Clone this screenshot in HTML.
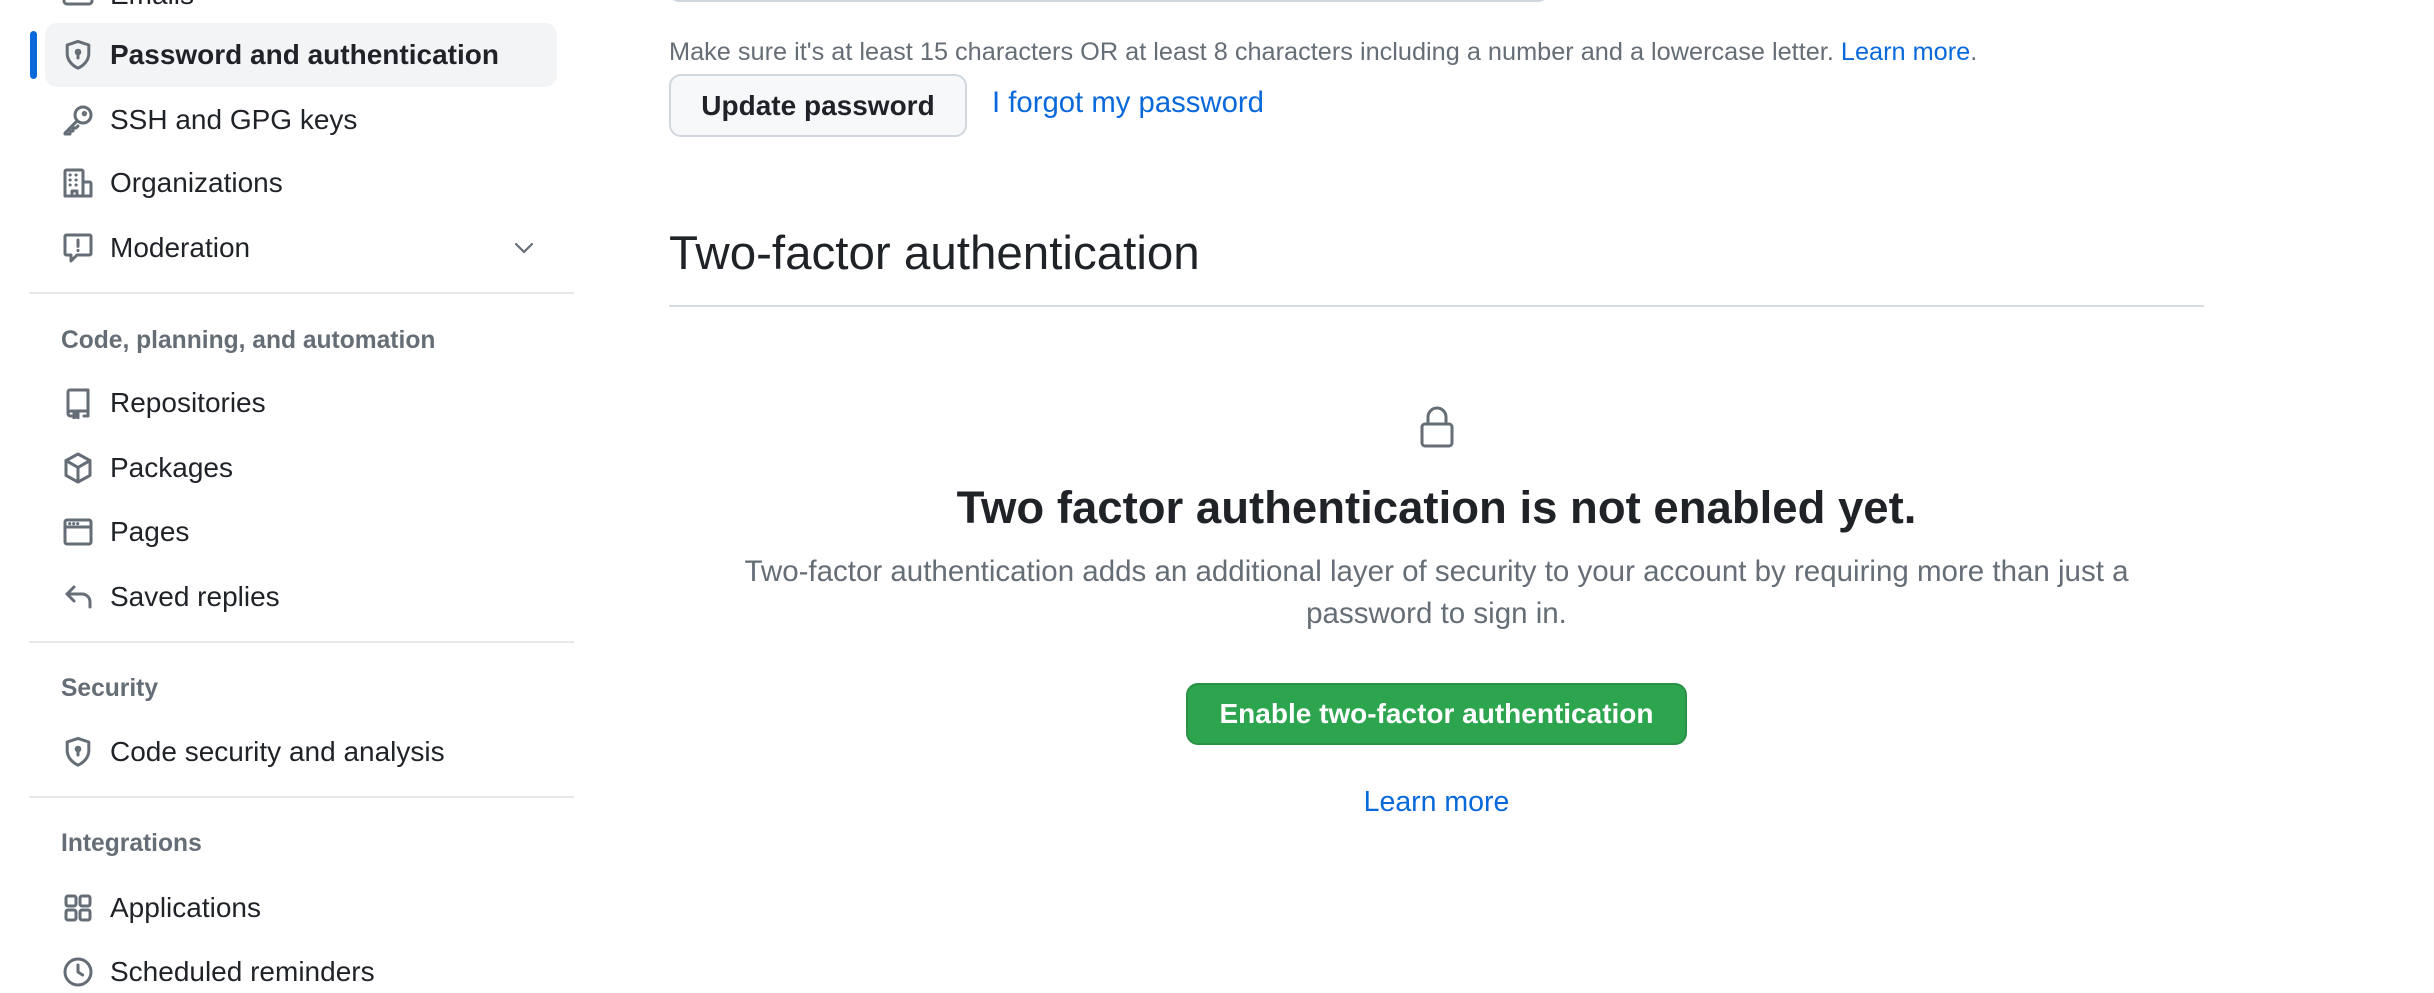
<!DOCTYPE html>
<html><head><meta charset="utf-8">
<style>
*{margin:0;padding:0;box-sizing:border-box}
body{width:2434px;height:983px;background:#fff;position:relative;overflow:hidden;font-family:"Liberation Sans",Helvetica,Arial,sans-serif;color:#1f2328}
.a{position:absolute;white-space:nowrap}
.item{position:absolute;left:110px;font-size:28px;line-height:34px;color:#1f2328}
.ic{position:absolute;left:62px;width:32px;height:32px}
.ic svg{width:32px;height:32px;fill:none;stroke:#656d76;stroke-width:1.5;stroke-linecap:round;stroke-linejoin:round}
.hd{position:absolute;left:61px;font-size:24.6px;font-weight:bold;color:#656d76}
.div{position:absolute;left:29px;width:545px;height:2px;background:#e6e9ec}
</style></head><body>

<div class="ic" style="top:-22px"><svg viewBox="0 0 16 16"><rect x="1" y="3" width="14" height="10" rx="1.5"/></svg></div>
<div class="item" style="top:-22px">Emails</div>

<div class="a" style="left:30px;top:31px;width:7px;height:48px;background:#0969da;border-radius:4px"></div>
<div class="a" style="left:45px;top:23px;width:512px;height:64px;background:#f3f4f6;border-radius:12px"></div>
<div class="ic" style="top:39px"><svg viewBox="0 0 16 16"><path d="M8 1.2 2.6 3v4.3c0 3.3 2.4 5.9 5.4 7.3 3-1.4 5.4-4 5.4-7.3V3z"/><circle cx="8" cy="6.5" r=".9"/><path d="M8 7.3v2.2"/></svg></div>
<div class="item" style="top:38px;font-weight:bold">Password and authentication</div>

<div class="ic" style="top:104px"><svg viewBox="0 0 16 16"><circle cx="10.5" cy="5.5" r="4"/><circle cx="11.2" cy="4.8" r=".6"/><path d="M7.6 8.4 1.5 14.5v.5h2.5v-1.5h1.5V12h1.5l1-1"/></svg></div>
<div class="item" style="top:103px">SSH and GPG keys</div>

<div class="ic" style="top:167px"><svg viewBox="0 0 16 16"><path d="M1.5 14.5V2.2c0-.4.3-.7.7-.7h7.6c.4 0 .7.3.7.7v12.3M10.5 7.5h3.3c.4 0 .7.3.7.7v6.3H1.5M5 14.5v-2.5h2.5v2.5"/><path d="M4 4h.1M7 4h.1M4 6.5h.1M7 6.5h.1M4 9h.1M7 9h.1"/></svg></div>
<div class="item" style="top:166px">Organizations</div>

<div class="ic" style="top:232px"><svg viewBox="0 0 16 16"><path d="M1.5 2.2c0-.4.3-.7.7-.7h11.6c.4 0 .7.3.7.7v8.6c0 .4-.3.7-.7.7H7.5L4.5 14.5v-3h-2.3c-.4 0-.7-.3-.7-.7z"/><path d="M8 4v3.2M8 9.2v.1"/></svg></div>
<div class="item" style="top:231px">Moderation</div>
<svg class="a" style="left:512px;top:238px;width:24px;height:20px" viewBox="0 0 24 20"><path d="M4 6l8 8 8-8" fill="none" stroke="#656d76" stroke-width="2.2" stroke-linecap="round" stroke-linejoin="round"/></svg>

<div class="div" style="top:292px"></div>
<div class="hd" style="top:327px">Code, planning, and automation</div>

<div class="ic" style="top:387px"><svg viewBox="0 0 16 16"><path d="M3 13V2.5c0-.6.4-1 1-1h9v10.5H4.5c-.8 0-1.5.5-1.5 1.3 0 .7.6 1.2 1.3 1.2H5M11 14.5h2v-2.5"/><path d="M6 13v2.5l1-.8 1 .8V13z" fill="#656d76"/></svg></div>
<div class="item" style="top:386px">Repositories</div>

<div class="ic" style="top:452px"><svg viewBox="0 0 16 16"><path d="M8 1 14 4.3v7.4L8 15 2 11.7V4.3z"/><path d="M2 4.3 8 7.7l6-3.4M8 7.7V15"/></svg></div>
<div class="item" style="top:451px">Packages</div>

<div class="ic" style="top:516px"><svg viewBox="0 0 16 16"><rect x="1.5" y="2" width="13" height="12" rx="1"/><path d="M1.5 5.5h13M3.8 3.8h.1M5.8 3.8h.1M7.8 3.8h.1"/></svg></div>
<div class="item" style="top:515px">Pages</div>

<div class="ic" style="top:581px"><svg viewBox="0 0 16 16"><path d="M6 3 2.5 6.5 6 10M2.5 6.5h7.5c2.2 0 4 1.8 4 4V13"/></svg></div>
<div class="item" style="top:580px">Saved replies</div>

<div class="div" style="top:641px"></div>
<div class="hd" style="top:675px">Security</div>

<div class="ic" style="top:736px"><svg viewBox="0 0 16 16"><path d="M8 1.2 2.6 3v4.3c0 3.3 2.4 5.9 5.4 7.3 3-1.4 5.4-4 5.4-7.3V3z"/><circle cx="8" cy="6.5" r=".9"/><path d="M8 7.3v2.2"/></svg></div>
<div class="item" style="top:735px">Code security and analysis</div>

<div class="div" style="top:796px"></div>
<div class="hd" style="top:830px">Integrations</div>

<div class="ic" style="top:892px"><svg viewBox="0 0 16 16"><rect x="2" y="2" width="5" height="5" rx="1"/><rect x="9" y="2" width="5" height="5" rx="1"/><rect x="2" y="9" width="5" height="5" rx="1"/><rect x="9" y="9" width="5" height="5" rx="1"/></svg></div>
<div class="item" style="top:891px">Applications</div>

<div class="ic" style="top:956px"><svg viewBox="0 0 16 16"><circle cx="8" cy="8" r="6.5"/><path d="M8 4.5V8l2.3 1.5"/></svg></div>
<div class="item" style="top:955px">Scheduled reminders</div>

<!-- main -->
<div class="a" style="left:669px;top:-20px;width:879px;height:22px;border:2px solid #d0d7de;border-radius:10px"></div>
<div class="a" style="left:669px;top:38px;font-size:25.3px;color:#656d76">Make sure it's at least 15 characters OR at least 8 characters including a number and a lowercase letter. <span style="color:#0969da">Learn more</span>.</div>
<div class="a" style="left:669px;top:74px;width:298px;height:63px;background:#f6f8fa;border:2px solid #d0d7de;border-radius:12px;font-size:28px;line-height:59px;text-align:center;color:#1f2328;font-weight:bold">Update password</div>
<div class="a" style="left:992px;top:86px;font-size:29.3px;color:#0969da">I forgot my password</div>

<div class="a" style="left:669px;top:226px;font-size:47.5px;color:#1f2328">Two-factor authentication</div>
<div class="a" style="left:669px;top:305px;width:1535px;height:2px;background:#d8dee4"></div>

<svg class="a" style="left:1418px;top:406px;width:38px;height:42px" viewBox="0 0 38 42"><path d="M10 18v-7a9 9 0 0 1 18 0v7" fill="none" stroke="#656d76" stroke-width="3"/><rect x="4" y="18" width="30" height="22" rx="3" fill="none" stroke="#656d76" stroke-width="3"/></svg>

<div class="a" style="left:669px;width:1535px;top:482px;text-align:center;font-size:45.5px;font-weight:bold;color:#1f2328">Two factor authentication is not enabled yet.</div>
<div class="a" style="left:669px;width:1535px;top:551px;text-align:center;font-size:29.5px;line-height:42px;color:#656d76">Two-factor authentication adds an additional layer of security to your account by requiring more than just a<br>password to sign in.</div>

<div class="a" style="left:1186px;top:683px;width:501px;height:62px;background:#2da44e;border:2px solid #2a9147;border-radius:12px;color:#fff;font-size:28px;font-weight:bold;line-height:58px;text-align:center">Enable two-factor authentication</div>
<div class="a" style="left:669px;width:1535px;top:786px;text-align:center;font-size:28.5px;color:#0969da">Learn more</div>

</body></html>
